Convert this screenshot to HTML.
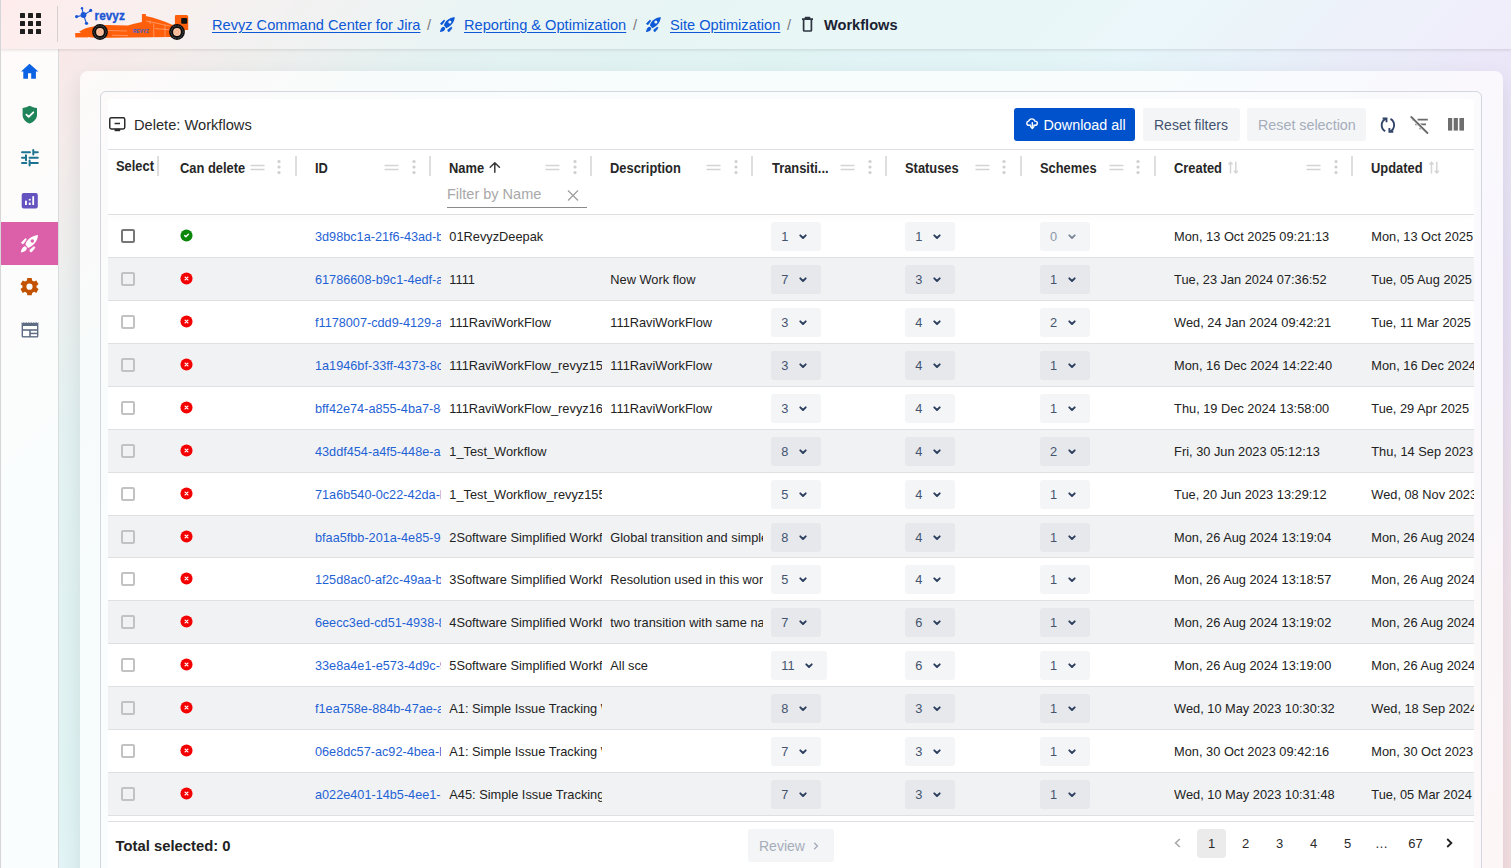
<!DOCTYPE html>
<html><head><meta charset="utf-8">
<style>
*{box-sizing:border-box}
html,body{margin:0;padding:0}
body{width:1511px;height:868px;overflow:hidden;position:relative;font-family:"Liberation Sans",sans-serif;
background:linear-gradient(135deg,#ffe6e6 0%,#f2eceb 10%,#e3f1f1 21%,#e0f3f3 35%,#e4f4f8 50%,#ebe7f8 65%,#e9e0f4 77%,#f0e0e9 88%,#f4dfe1 100%);}
.abs{position:absolute}
#hdr{position:absolute;left:0;top:0;width:1511px;height:49px;background:rgba(255,255,255,0.25);box-shadow:0 1px 3px rgba(0,0,0,0.12);z-index:3}
#lline{position:absolute;left:0;top:0;width:1px;height:868px;background:#d6d6d6;z-index:4}
#side{position:absolute;left:0;top:49px;width:59px;height:819px;background:rgba(255,255,255,0.82);border-right:1px solid #d9dcdc;z-index:2}
.si{position:absolute;left:1px;width:57px;height:43px;display:flex;align-items:center;justify-content:center;padding-top:2px}
#outer{position:absolute;left:80px;top:71px;width:1423px;height:830px;background:rgba(255,255,255,0.72);border-radius:8px;box-shadow:0 8px 20px rgba(30,40,60,0.10)}
#inner{position:absolute;left:100px;top:91px;width:1382px;height:810px;background:rgba(255,255,255,0.25);border:1px solid #d3d6de;border-radius:6px}
#content{position:absolute;left:108px;top:99px;width:1366px;height:800px;background:#fff;overflow:hidden;border-radius:3px}
.bc{position:absolute;top:15px;font-size:14.6px;line-height:20px;white-space:nowrap}
.lnk{color:#0c58d6;text-decoration:underline;text-underline-offset:2px}
.sl{color:#7a7a7a;}
.title{position:absolute;left:26px;top:17.5px;font-size:14.65px;color:#2a2a2a;line-height:18px}
.btn{position:absolute;top:9px;height:33px;border-radius:3px;font-size:14px;display:flex;align-items:center;white-space:nowrap}
.hl{position:absolute;font-size:14px;font-weight:700;color:#272727;line-height:16px;white-space:nowrap;display:flex;align-items:center;transform:scaleX(0.92);transform-origin:0 0}
.hx{position:relative;display:inline-flex}
.hd,.kb{position:absolute;display:block;line-height:0}
.dv{position:absolute;top:57px;width:2px;height:20px;background:#dedede}
#hline{position:absolute;left:0;top:50px;width:1366px;height:1px;background:#dcdde6}
#hbot{position:absolute;left:0;top:114.80000000000001px;width:1366px;height:1px;background:#e0e0e0;z-index:2;box-shadow:0 2px 5px rgba(0,0,0,0.09)}
.row{position:absolute;left:0;width:1366px;height:43px;border-bottom:1px solid #dfe0e2}
.c{position:absolute;top:2px;height:40px;line-height:40px;font-size:12.8px;color:#222;white-space:nowrap;overflow:hidden}
.id{color:#1f62d4;font-size:12.7px}
.cb{position:absolute;top:14.4px;width:13.5px;height:13.5px;border:2px solid #777;border-radius:2px;background:#fff}
.cbd{border-color:#c2c2c2;background:transparent}
.st{position:absolute;top:14.4px;line-height:0}
.ddc{display:flex;align-items:center;top:0;height:42px}
.dd{display:inline-flex;align-items:center;height:29px;padding:0 13.7px 0 10px;background:rgba(9,30,66,0.045);border-radius:3px;color:#44546f;font-size:12.8px}
.ddv{position:relative;top:1.4px}
.dd svg{margin-left:10.9px;color:#2c3e5d;position:relative;top:0.7px}
.dd.dis{color:#8f98a8}
.dd.dis svg{color:#7f8999}
#foot{position:absolute;left:0;top:721.5px;width:1366px;height:1px;background:#dcdde6}
.pg{position:absolute;top:730px;height:28.5px;width:29px;font-size:13px;color:#2a2a2a;display:flex;align-items:center;justify-content:center}
</style></head><body>
<div id="lline"></div>
<div id="hdr">
  <svg class="abs" style="left:20px;top:13px" width="21" height="21" viewBox="0 0 21 21"><g fill="#1e1e1e"><rect x="0" y="0" width="5" height="5" rx="0.6"/><rect x="8" y="0" width="5" height="5" rx="0.6"/><rect x="16" y="0" width="5" height="5" rx="0.6"/><rect x="0" y="8" width="5" height="5" rx="0.6"/><rect x="8" y="8" width="5" height="5" rx="0.6"/><rect x="16" y="8" width="5" height="5" rx="0.6"/><rect x="0" y="16" width="5" height="5" rx="0.6"/><rect x="8" y="16" width="5" height="5" rx="0.6"/><rect x="16" y="16" width="5" height="5" rx="0.6"/></g></svg>
  <div class="abs" style="left:57px;top:6px;width:1px;height:36px;background:#d4d0d0"></div>
  <svg class="abs" style="left:70px;top:2px" width="125" height="44" viewBox="70 2 125 44">
  <g stroke="#1a56d6" stroke-width="1.1"><line x1="83.5" y1="15.2" x2="82" y2="8.2"/><line x1="83.5" y1="15.2" x2="90.7" y2="10.6"/><line x1="83.5" y1="15.2" x2="76.6" y2="16.6"/><line x1="83.5" y1="15.2" x2="86.5" y2="23.3"/></g>
  <g fill="#1a56d6"><circle cx="83.5" cy="15" r="2.9"/><circle cx="82" cy="8.2" r="1.2"/><circle cx="90.7" cy="10.4" r="1.6"/><circle cx="76.6" cy="16.6" r="1.6"/><circle cx="86.5" cy="23.3" r="1.6"/></g>
  <text x="94.6" y="19.8" font-family="Liberation Sans" font-weight="700" font-size="12.3" fill="#1a56d6" stroke="#1a56d6" stroke-width="0.35" textLength="30.2" lengthAdjust="spacingAndGlyphs">revyz</text>
  <g fill="#ff5e0b">
    <path d="M75.2 33 H88 V37.4 H75.2 Z"/>
    <path d="M79 31.8 C83 29 87 27.3 92 26.7 L106 25 L128 25.5 L133 24 L141.9 21.9 L141.9 14 L145.9 14 L145.9 16 C156 18 165 21.5 172 24.7 L174.9 24.7 L174.9 16 C175 15.5 175.5 15 176.5 15 L186.5 15 C187.5 15 188.2 15.8 188.2 17 L188.2 29.9 L185 29.9 L183 33 L171 37 L109 37.8 L92 37.4 L88 37 Z"/>
  </g>
  <g stroke="#fff" stroke-width="0.45" fill="none" opacity="0.75"><path d="M153.8 23.5 V37 M126 23.5 L131 23 M108 30.5 L127 31 M146 21 L170 26 M155 28.5 L172 30 M112 35.2 L128 35.6 M150 20.5 L150 24 M165 25 L165 37"/></g>
  <rect x="181.2" y="18" width="6" height="5.7" rx="1" fill="#111"/>
  <text x="133" y="32.9" font-family="Liberation Sans" font-weight="700" font-size="5.2" fill="#2f5fcf" textLength="16" lengthAdjust="spacingAndGlyphs">REVYZ</text>
  <circle cx="100" cy="32" r="7.9" fill="#0d0d0d"/><circle cx="100" cy="32" r="3.9" fill="#f8c3a3"/><circle cx="100" cy="32" r="1.6" fill="none" stroke="#f3a47a" stroke-width="0.6"/><circle cx="106.10" cy="32.00" r="0.45" fill="#d8d8d8"/><circle cx="105.73" cy="34.09" r="0.45" fill="#d8d8d8"/><circle cx="104.67" cy="35.92" r="0.45" fill="#d8d8d8"/><circle cx="103.05" cy="37.28" r="0.45" fill="#d8d8d8"/><circle cx="101.06" cy="38.01" r="0.45" fill="#d8d8d8"/><circle cx="98.94" cy="38.01" r="0.45" fill="#d8d8d8"/><circle cx="96.95" cy="37.28" r="0.45" fill="#d8d8d8"/><circle cx="95.33" cy="35.92" r="0.45" fill="#d8d8d8"/><circle cx="94.27" cy="34.09" r="0.45" fill="#d8d8d8"/><circle cx="93.90" cy="32.00" r="0.45" fill="#d8d8d8"/><circle cx="94.27" cy="29.91" r="0.45" fill="#d8d8d8"/><circle cx="95.33" cy="28.08" r="0.45" fill="#d8d8d8"/><circle cx="96.95" cy="26.72" r="0.45" fill="#d8d8d8"/><circle cx="98.94" cy="25.99" r="0.45" fill="#d8d8d8"/><circle cx="101.06" cy="25.99" r="0.45" fill="#d8d8d8"/><circle cx="103.05" cy="26.72" r="0.45" fill="#d8d8d8"/><circle cx="104.67" cy="28.08" r="0.45" fill="#d8d8d8"/><circle cx="105.73" cy="29.91" r="0.45" fill="#d8d8d8"/><circle cx="177" cy="32" r="7.9" fill="#0d0d0d"/><circle cx="177" cy="32" r="3.9" fill="#f8c3a3"/><circle cx="177" cy="32" r="1.6" fill="none" stroke="#f3a47a" stroke-width="0.6"/><circle cx="183.10" cy="32.00" r="0.45" fill="#d8d8d8"/><circle cx="182.73" cy="34.09" r="0.45" fill="#d8d8d8"/><circle cx="181.67" cy="35.92" r="0.45" fill="#d8d8d8"/><circle cx="180.05" cy="37.28" r="0.45" fill="#d8d8d8"/><circle cx="178.06" cy="38.01" r="0.45" fill="#d8d8d8"/><circle cx="175.94" cy="38.01" r="0.45" fill="#d8d8d8"/><circle cx="173.95" cy="37.28" r="0.45" fill="#d8d8d8"/><circle cx="172.33" cy="35.92" r="0.45" fill="#d8d8d8"/><circle cx="171.27" cy="34.09" r="0.45" fill="#d8d8d8"/><circle cx="170.90" cy="32.00" r="0.45" fill="#d8d8d8"/><circle cx="171.27" cy="29.91" r="0.45" fill="#d8d8d8"/><circle cx="172.33" cy="28.08" r="0.45" fill="#d8d8d8"/><circle cx="173.95" cy="26.72" r="0.45" fill="#d8d8d8"/><circle cx="175.94" cy="25.99" r="0.45" fill="#d8d8d8"/><circle cx="178.06" cy="25.99" r="0.45" fill="#d8d8d8"/><circle cx="180.05" cy="26.72" r="0.45" fill="#d8d8d8"/><circle cx="181.67" cy="28.08" r="0.45" fill="#d8d8d8"/><circle cx="182.73" cy="29.91" r="0.45" fill="#d8d8d8"/>
</svg>
  <div class="bc" style="left:212px"><span class="lnk">Revyz Command Center for Jira</span></div>
  <div class="bc sl" style="left:427px">/</div>
  <svg class="abs" style="left:440.4px;top:16.5px" width="14.8" height="15.1" viewBox="5.9 5 17.1 17.5"><path d="M10.4 14.5 C11.5 10 16 6 23 5 C22.6 11 19 15.5 13.1 18 Z" fill="#0c58d6"/><circle cx="17.3" cy="10.9" r="1.75" fill="#ecf2f2"/><path d="M6.4 12.5 L10.4 8.6 L11.3 8.9 L10.9 10.1 L8.5 13.6 L7.1 13.7 Z" fill="#0c58d6" stroke="#0c58d6" stroke-width="0.7" stroke-linejoin="round"/><path d="M14.8 19.9 L19.1 16.5 L19.8 17.5 L19.1 18.9 L16.4 22 L15.3 21.8 Z" fill="#0c58d6" stroke="#0c58d6" stroke-width="0.7" stroke-linejoin="round"/><path d="M5.9 22.5 C6 20 7.3 17.2 9.6 16.3 C10.6 16.2 11.8 17.2 11.9 18.6 C11.4 20.8 8.8 22.3 5.9 22.5 Z" fill="#0c58d6"/></svg>
  <div class="bc" style="left:464px"><span class="lnk">Reporting &amp; Optimization</span></div>
  <div class="bc sl" style="left:633px">/</div>
  <svg class="abs" style="left:646.3px;top:16.6px" width="14.8" height="15.1" viewBox="5.9 5 17.1 17.5"><path d="M10.4 14.5 C11.5 10 16 6 23 5 C22.6 11 19 15.5 13.1 18 Z" fill="#0c58d6"/><circle cx="17.3" cy="10.9" r="1.75" fill="#e8f5f5"/><path d="M6.4 12.5 L10.4 8.6 L11.3 8.9 L10.9 10.1 L8.5 13.6 L7.1 13.7 Z" fill="#0c58d6" stroke="#0c58d6" stroke-width="0.7" stroke-linejoin="round"/><path d="M14.8 19.9 L19.1 16.5 L19.8 17.5 L19.1 18.9 L16.4 22 L15.3 21.8 Z" fill="#0c58d6" stroke="#0c58d6" stroke-width="0.7" stroke-linejoin="round"/><path d="M5.9 22.5 C6 20 7.3 17.2 9.6 16.3 C10.6 16.2 11.8 17.2 11.9 18.6 C11.4 20.8 8.8 22.3 5.9 22.5 Z" fill="#0c58d6"/></svg>
  <div class="bc" style="left:670px"><span class="lnk">Site Optimization</span></div>
  <div class="bc sl" style="left:787px">/</div>
  <svg class="abs" style="left:801px;top:16px" width="13" height="16" viewBox="0 0 13 16"><path d="M1 3.2H12M4.5 3V1.6H8.5V3M2.6 3.4V14.2C2.6 14.7 3 15 3.4 15H9.6C10 15 10.4 14.7 10.4 14.2V3.4" fill="none" stroke="#2e3440" stroke-width="1.7" stroke-linejoin="round"/></svg>
  <div class="bc" style="left:824px;font-weight:700;color:#1a2232">Workflows</div>
</div>
<div id="side">
  <div class="si" style="top:1px"><svg width="30" height="30" viewBox="0 0 30 30"><path d="M14.5 5.7 L6 13.5 H8.3 V20.7 H13 V15.2 H16.2 V20.7 H20.9 V13.5 H23.3 Z" fill="#0b62e3"/></svg></div>
<div class="si" style="top:44px"><svg width="30" height="30" viewBox="0 0 30 30"><path d="M14.6 4.8 C12.3 6 10 6.8 7.6 7.1 V14 C7.6 18 10.6 21 14.6 22.6 C18.6 21 22 18 22 14 V7.1 C19.3 6.8 17 6 14.6 4.8 Z" fill="#1f845a"/><path d="M11.4 13.6 L13.7 15.9 L18.3 11.3" fill="none" stroke="#fff" stroke-width="1.8" stroke-linecap="round" stroke-linejoin="round"/></svg></div>
<div class="si" style="top:87px"><svg width="30" height="30" viewBox="0 0 30 30"><g stroke="#1d7491" stroke-width="2" stroke-linecap="round"><path d="M7 8.3H15M18.3 6V10.4M18.3 8.3H22.8M7 13.7H10.5M11 11.3V16.2M14.5 13.7H22.8M7 19H11.3M14.6 16.6V21.6M14.6 19H22.8"/></g></svg></div>
<div class="si" style="top:130px"><svg width="30" height="30" viewBox="0 0 30 30"><rect x="6.7" y="5.9" width="16.1" height="15.7" rx="2" fill="#6554c0"/><g fill="#fff"><rect x="10" y="13.7" width="1.9" height="4.3"/><rect x="13.8" y="11.9" width="1.9" height="1.6"/><rect x="13.8" y="15.6" width="1.9" height="2.4"/><rect x="17.3" y="9.2" width="1.8" height="8.8"/></g></svg></div>
<div class="si active" style="top:173px;background:#dc5fa9"><svg width="30" height="30" viewBox="0 0 30 30"><path d="M10.4 14.5 C11.5 10 16 6 23 5 C22.6 11 19 15.5 13.1 18 Z" fill="#fff"/><circle cx="17.3" cy="10.9" r="1.75" fill="#dc5fa9"/><path d="M6.4 12.5 L10.4 8.6 L11.3 8.9 L10.9 10.1 L8.5 13.6 L7.1 13.7 Z" fill="#fff" stroke="#fff" stroke-width="0.7" stroke-linejoin="round"/><path d="M14.8 19.9 L19.1 16.5 L19.8 17.5 L19.1 18.9 L16.4 22 L15.3 21.8 Z" fill="#fff" stroke="#fff" stroke-width="0.7" stroke-linejoin="round"/><path d="M5.9 22.5 C6 20 7.3 17.2 9.6 16.3 C10.6 16.2 11.8 17.2 11.9 18.6 C11.4 20.8 8.8 22.3 5.9 22.5 Z" fill="#fff"/></svg></div>
<div class="si" style="top:216px"><svg width="30" height="30" viewBox="0 0 30 30"><g transform="translate(14.5 13.7)"><path d="M-2.2 -8.6 H2.2 L2.6 -6.2 L4.6 -5.1 L6.8 -6.2 L9 -2.4 L7 -0.9 V0.9 L9 2.4 L6.8 6.2 L4.6 5.1 L2.6 6.2 L2.2 8.6 H-2.2 L-2.6 6.2 L-4.6 5.1 L-6.8 6.2 L-9 2.4 L-7 0.9 V-0.9 L-9 -2.4 L-6.8 -6.2 L-4.6 -5.1 L-2.6 -6.2 Z M0 -3.1 A3.1 3.1 0 1 0 0 3.1 A3.1 3.1 0 1 0 0 -3.1 Z" fill="#c25100" fill-rule="evenodd"/></g></svg></div>
<div class="si" style="top:259px"><svg width="30" height="30" viewBox="0 0 30 30"><path d="M6.6 6.2 L7.6 7 L8.8 6.2 L10 7 L11.3 6.2 L12.5 7 L13.8 6.2 L15 7 L16.3 6.2 L17.5 7 L18.8 6.2 L20 7 L21.3 6.2 L22.6 7 L23.4 6.2 V20 C23.4 21 22.6 21.6 21.8 21.6 H8.2 C7.4 21.6 6.6 21 6.6 20 Z" fill="#5e6c84"/><g fill="#fff"><rect x="8" y="10" width="14" height="3.2"/><rect x="8" y="14.8" width="6.2" height="5.3"/><rect x="15.8" y="14.8" width="6.2" height="1.9"/><rect x="15.8" y="18.2" width="6.2" height="1.9"/></g></svg></div>
</div>
<div id="outer"></div>
<div id="inner"></div>
<div id="content">
  <svg class="abs" style="left:1px;top:17.8px" width="17" height="15" viewBox="0 0 17 15"><rect x="0.75" y="0.85" width="15" height="11.1" rx="1.6" fill="none" stroke="#2b2b2b" stroke-width="1.5"/><path d="M5.6 6.4H11" stroke="#2b2b2b" stroke-width="1.5"/><rect x="5.6" y="11.8" width="5.6" height="2.4" fill="#2b2b2b"/></svg>
  <div class="title" style="left:26px;top:17px">Delete: Workflows</div>
  <div class="btn" style="left:906px;width:121px;background:#0052cc;color:#fff"><svg style="position:absolute;left:12px;top:10px" width="13" height="13" viewBox="0 0 13 13"><path d="M4.5 7.3H3C1.7 7.3 0.8 6.4 0.8 5.2C0.8 4.1 1.6 3.2 2.7 3.1C3.1 1.8 4.3 0.9 5.8 0.9C7.3 0.9 8.5 1.9 8.8 3.1C10.2 3.1 11.3 4 11.3 5.2C11.3 6.4 10.3 7.3 9.1 7.3H7.8" fill="none" stroke="#fff" stroke-width="1.4" stroke-linecap="round"/><path d="M6.3 4.6V10.3M4.6 8.6L6.3 10.5L8 8.6" fill="none" stroke="#fff" stroke-width="1.4" stroke-linecap="round" stroke-linejoin="round"/></svg><span style="position:absolute;left:29.5px;font-size:14.35px">Download all</span></div>
  <div class="btn" style="left:1035px;width:97px;background:#f4f5f7;color:#42526e"><span style="position:absolute;left:11px">Reset filters</span></div>
  <div class="btn" style="left:1139px;width:119px;background:#f4f5f7;color:#a5adba"><span style="position:absolute;left:11px;font-size:14.3px">Reset selection</span></div>
  <svg class="abs" style="left:1272px;top:18px" width="17" height="17" viewBox="0 0 17 17"><path d="M6.2 1.6 C3.5 2.7 1.7 5.2 1.7 8.2 C1.7 10.7 3 12.9 5.2 14.1" fill="none" stroke="#33466a" stroke-width="1.9"/><path d="M2.6 1.5 H6.5 V5.3" fill="none" stroke="#33466a" stroke-width="1.9"/><path d="M10.5 1.9 C12.6 3.1 14.1 5.4 14.1 8 C14.1 11 12.4 13.5 9.8 14.6" fill="none" stroke="#33466a" stroke-width="1.9"/><path d="M9.4 10.9 V14.8 H13.3" fill="none" stroke="#33466a" stroke-width="1.9"/></svg>
  <svg class="abs" style="left:1302px;top:17px" width="19" height="18" viewBox="0 0 19 18"><g stroke="#6b6b6b" stroke-width="1.8"><path d="M7.6 3.6H17.8M1.9 3.6H3.4M5.3 8.3H16M9.4 12.4H12.5"/></g><path d="M1.3 1 L17.4 17" stroke="#fff" stroke-width="3.4"/><path d="M1.3 1 L17.4 17" stroke="#6b6b6b" stroke-width="1.8" stroke-linecap="round"/></svg>
  <svg class="abs" style="left:1340px;top:19.3px" width="17" height="13" viewBox="0 0 17 13"><g fill="#6e6e6e"><rect x="0" y="0" width="4.2" height="12.6"/><rect x="5.7" y="0" width="4.2" height="12.6"/><rect x="11.4" y="0" width="4.6" height="12.6"/></g></svg>
  <div id="hline"></div>
  <div class="hl" style="left:7.8px;top:59.400000000000006px">Select</div><div class="dv" style="left:49px"></div><div class="hl" style="left:72.0px;top:60.69999999999999px">Can delete</div><span class="hd" style="left:141.5px;top:65px"><svg width="15" height="7" viewBox="0 0 15 7"><path d="M0.5 1.5H14.5M0.5 5.5H14.5" stroke="#d4d4d4" stroke-width="1.6"/></svg></span><span class="kb" style="left:169.2px;top:59.5px"><svg width="4" height="16" viewBox="0 0 4 16"><circle cx="2" cy="2.5" r="1.6" fill="#cfcfcf"/><circle cx="2" cy="8" r="1.6" fill="#cfcfcf"/><circle cx="2" cy="13.5" r="1.6" fill="#cfcfcf"/></svg></span><div class="dv" style="left:186.8px"></div><div class="hl" style="left:207.0px;top:60.69999999999999px">ID</div><span class="hd" style="left:275.8px;top:65px"><svg width="15" height="7" viewBox="0 0 15 7"><path d="M0.5 1.5H14.5M0.5 5.5H14.5" stroke="#d4d4d4" stroke-width="1.6"/></svg></span><span class="kb" style="left:303.5px;top:59.5px"><svg width="4" height="16" viewBox="0 0 4 16"><circle cx="2" cy="2.5" r="1.6" fill="#cfcfcf"/><circle cx="2" cy="8" r="1.6" fill="#cfcfcf"/><circle cx="2" cy="13.5" r="1.6" fill="#cfcfcf"/></svg></span><div class="dv" style="left:321.1px"></div><div class="hl" style="left:341.3px;top:60.69999999999999px">Name</div><span class="hd" style="left:381.2px;top:63px"><svg width="12" height="11" viewBox="0 0 12 11"><path d="M5.8 10.2V0.9M1.2 5.3L5.8 0.8L10.4 5.3" fill="none" stroke="#3a3a3a" stroke-width="1.5" stroke-linecap="round" stroke-linejoin="round"/></svg></span><span class="hd" style="left:436.8px;top:65px"><svg width="15" height="7" viewBox="0 0 15 7"><path d="M0.5 1.5H14.5M0.5 5.5H14.5" stroke="#d4d4d4" stroke-width="1.6"/></svg></span><span class="kb" style="left:464.5px;top:59.5px"><svg width="4" height="16" viewBox="0 0 4 16"><circle cx="2" cy="2.5" r="1.6" fill="#cfcfcf"/><circle cx="2" cy="8" r="1.6" fill="#cfcfcf"/><circle cx="2" cy="13.5" r="1.6" fill="#cfcfcf"/></svg></span><div class="dv" style="left:482.1px"></div><div class="hl" style="left:502.3px;top:60.69999999999999px">Description</div><span class="hd" style="left:598.0px;top:65px"><svg width="15" height="7" viewBox="0 0 15 7"><path d="M0.5 1.5H14.5M0.5 5.5H14.5" stroke="#d4d4d4" stroke-width="1.6"/></svg></span><span class="kb" style="left:625.7px;top:59.5px"><svg width="4" height="16" viewBox="0 0 4 16"><circle cx="2" cy="2.5" r="1.6" fill="#cfcfcf"/><circle cx="2" cy="8" r="1.6" fill="#cfcfcf"/><circle cx="2" cy="13.5" r="1.6" fill="#cfcfcf"/></svg></span><div class="dv" style="left:643.3px"></div><div class="hl" style="left:663.5px;top:60.69999999999999px">Transiti...</div><span class="hd" style="left:731.9px;top:65px"><svg width="15" height="7" viewBox="0 0 15 7"><path d="M0.5 1.5H14.5M0.5 5.5H14.5" stroke="#d4d4d4" stroke-width="1.6"/></svg></span><span class="kb" style="left:759.6px;top:59.5px"><svg width="4" height="16" viewBox="0 0 4 16"><circle cx="2" cy="2.5" r="1.6" fill="#cfcfcf"/><circle cx="2" cy="8" r="1.6" fill="#cfcfcf"/><circle cx="2" cy="13.5" r="1.6" fill="#cfcfcf"/></svg></span><div class="dv" style="left:777.2px"></div><div class="hl" style="left:797.4px;top:60.69999999999999px">Statuses</div><span class="hd" style="left:866.7px;top:65px"><svg width="15" height="7" viewBox="0 0 15 7"><path d="M0.5 1.5H14.5M0.5 5.5H14.5" stroke="#d4d4d4" stroke-width="1.6"/></svg></span><span class="kb" style="left:894.4px;top:59.5px"><svg width="4" height="16" viewBox="0 0 4 16"><circle cx="2" cy="2.5" r="1.6" fill="#cfcfcf"/><circle cx="2" cy="8" r="1.6" fill="#cfcfcf"/><circle cx="2" cy="13.5" r="1.6" fill="#cfcfcf"/></svg></span><div class="dv" style="left:912.0px"></div><div class="hl" style="left:932.2px;top:60.69999999999999px">Schemes</div><span class="hd" style="left:1000.6px;top:65px"><svg width="15" height="7" viewBox="0 0 15 7"><path d="M0.5 1.5H14.5M0.5 5.5H14.5" stroke="#d4d4d4" stroke-width="1.6"/></svg></span><span class="kb" style="left:1028.3px;top:59.5px"><svg width="4" height="16" viewBox="0 0 4 16"><circle cx="2" cy="2.5" r="1.6" fill="#cfcfcf"/><circle cx="2" cy="8" r="1.6" fill="#cfcfcf"/><circle cx="2" cy="13.5" r="1.6" fill="#cfcfcf"/></svg></span><div class="dv" style="left:1045.9px"></div><div class="hl" style="left:1066.1px;top:60.69999999999999px">Created</div><span class="hd" style="left:1119.9px;top:62px"><svg width="11" height="13" viewBox="0 0 11 13"><path d="M2.5 11.9V1.2M0.9 2.9L2.5 1.2L4.1 2.9M7.8 1.2V11.9M6.2 10.2L7.8 11.9L9.4 10.2" fill="none" stroke="#d5d5d5" stroke-width="1.5" stroke-linecap="round" stroke-linejoin="round"/></svg></span><span class="hd" style="left:1197.8px;top:65px"><svg width="15" height="7" viewBox="0 0 15 7"><path d="M0.5 1.5H14.5M0.5 5.5H14.5" stroke="#d4d4d4" stroke-width="1.6"/></svg></span><span class="kb" style="left:1225.5px;top:59.5px"><svg width="4" height="16" viewBox="0 0 4 16"><circle cx="2" cy="2.5" r="1.6" fill="#cfcfcf"/><circle cx="2" cy="8" r="1.6" fill="#cfcfcf"/><circle cx="2" cy="13.5" r="1.6" fill="#cfcfcf"/></svg></span><div class="dv" style="left:1243.1px"></div><div class="hl" style="left:1263.3px;top:60.69999999999999px">Updated</div><span class="hd" style="left:1320.7px;top:62px"><svg width="11" height="13" viewBox="0 0 11 13"><path d="M2.5 11.9V1.2M0.9 2.9L2.5 1.2L4.1 2.9M7.8 1.2V11.9M6.2 10.2L7.8 11.9L9.4 10.2" fill="none" stroke="#d5d5d5" stroke-width="1.5" stroke-linecap="round" stroke-linejoin="round"/></svg></span>
  <div class="abs" style="left:339px;top:86px;width:140px;height:23px;border-bottom:1px solid #8a8a8a;">
    <span class="abs" style="left:0;top:1px;font-size:14.5px;color:#a8a8a8;white-space:nowrap">Filter by Name</span>
    <svg class="abs" style="left:120px;top:5px" width="12" height="11" viewBox="0 0 12 11"><path d="M1 0.5L11 10.5M11 0.5L1 10.5" stroke="#a0a0a0" stroke-width="1.3"/></svg>
  </div>
  <div id="hbot"></div>
  <div class="row" style="top:116px;height:43px;background:#fff"><span class="cb" style="left:13.2px"></span><span class="st" style="left:72.0px"><svg width="13" height="13" viewBox="0 0 13 13"><circle cx="6.5" cy="6.5" r="6.05" fill="#0b870b"/><path d="M4.6 6.6 L5.9 7.8 L8.4 5.3" fill="none" stroke="#fff" stroke-width="1.4" stroke-linecap="round" stroke-linejoin="round"/></svg></span><div class="c id" style="left:207.0px;width:126.3px">3d98bc1a-21f6-43ad-b9e1</div><div class="c" style="left:341.3px;width:153.0px">01RevyzDeepak</div><div class="c" style="left:502.3px;width:153.2px"></div><div class="c ddc" style="left:663.3px"><span class="dd"><span class="ddv">1</span><svg width="8" height="6" viewBox="0 0 8 6"><path d="M1.3 1.3 L4 4 L6.7 1.3" fill="none" stroke="currentColor" stroke-width="1.9" stroke-linecap="round" stroke-linejoin="round"/></svg></span></div><div class="c ddc" style="left:797.2px"><span class="dd"><span class="ddv">1</span><svg width="8" height="6" viewBox="0 0 8 6"><path d="M1.3 1.3 L4 4 L6.7 1.3" fill="none" stroke="currentColor" stroke-width="1.9" stroke-linecap="round" stroke-linejoin="round"/></svg></span></div><div class="c ddc" style="left:932.0px"><span class="dd dis"><span class="ddv">0</span><svg width="8" height="6" viewBox="0 0 8 6"><path d="M1.3 1.3 L4 4 L6.7 1.3" fill="none" stroke="currentColor" stroke-width="1.9" stroke-linecap="round" stroke-linejoin="round"/></svg></span></div><div class="c" style="left:1066.1px;width:189.2px">Mon, 13 Oct 2025 09:21:13</div><div class="c" style="left:1263.3px;width:189.0px">Mon, 13 Oct 2025</div></div>
<div class="row" style="top:159px;height:43px;background:#f1f2f4"><span class="cb cbd" style="left:13.2px"></span><span class="st" style="left:72.0px"><svg width="13" height="13" viewBox="0 0 13 13"><circle cx="6.5" cy="6.5" r="6.05" fill="#f50000"/><path d="M5.1 5.1 L7.9 7.9 M7.9 5.1 L5.1 7.9" fill="none" stroke="#fff" stroke-width="1.3" stroke-linecap="round"/></svg></span><div class="c id" style="left:207.0px;width:126.3px">61786608-b9c1-4edf-a3c2</div><div class="c" style="left:341.3px;width:153.0px">1111</div><div class="c" style="left:502.3px;width:153.2px">New Work flow</div><div class="c ddc" style="left:663.3px"><span class="dd"><span class="ddv">7</span><svg width="8" height="6" viewBox="0 0 8 6"><path d="M1.3 1.3 L4 4 L6.7 1.3" fill="none" stroke="currentColor" stroke-width="1.9" stroke-linecap="round" stroke-linejoin="round"/></svg></span></div><div class="c ddc" style="left:797.2px"><span class="dd"><span class="ddv">3</span><svg width="8" height="6" viewBox="0 0 8 6"><path d="M1.3 1.3 L4 4 L6.7 1.3" fill="none" stroke="currentColor" stroke-width="1.9" stroke-linecap="round" stroke-linejoin="round"/></svg></span></div><div class="c ddc" style="left:932.0px"><span class="dd"><span class="ddv">1</span><svg width="8" height="6" viewBox="0 0 8 6"><path d="M1.3 1.3 L4 4 L6.7 1.3" fill="none" stroke="currentColor" stroke-width="1.9" stroke-linecap="round" stroke-linejoin="round"/></svg></span></div><div class="c" style="left:1066.1px;width:189.2px">Tue, 23 Jan 2024 07:36:52</div><div class="c" style="left:1263.3px;width:189.0px">Tue, 05 Aug 2025</div></div>
<div class="row" style="top:202px;height:43px;background:#fff"><span class="cb cbd" style="left:13.2px"></span><span class="st" style="left:72.0px"><svg width="13" height="13" viewBox="0 0 13 13"><circle cx="6.5" cy="6.5" r="6.05" fill="#f50000"/><path d="M5.1 5.1 L7.9 7.9 M7.9 5.1 L5.1 7.9" fill="none" stroke="#fff" stroke-width="1.3" stroke-linecap="round"/></svg></span><div class="c id" style="left:207.0px;width:126.3px">f1178007-cdd9-4129-a1b2</div><div class="c" style="left:341.3px;width:153.0px">111RaviWorkFlow</div><div class="c" style="left:502.3px;width:153.2px">111RaviWorkFlow</div><div class="c ddc" style="left:663.3px"><span class="dd"><span class="ddv">3</span><svg width="8" height="6" viewBox="0 0 8 6"><path d="M1.3 1.3 L4 4 L6.7 1.3" fill="none" stroke="currentColor" stroke-width="1.9" stroke-linecap="round" stroke-linejoin="round"/></svg></span></div><div class="c ddc" style="left:797.2px"><span class="dd"><span class="ddv">4</span><svg width="8" height="6" viewBox="0 0 8 6"><path d="M1.3 1.3 L4 4 L6.7 1.3" fill="none" stroke="currentColor" stroke-width="1.9" stroke-linecap="round" stroke-linejoin="round"/></svg></span></div><div class="c ddc" style="left:932.0px"><span class="dd"><span class="ddv">2</span><svg width="8" height="6" viewBox="0 0 8 6"><path d="M1.3 1.3 L4 4 L6.7 1.3" fill="none" stroke="currentColor" stroke-width="1.9" stroke-linecap="round" stroke-linejoin="round"/></svg></span></div><div class="c" style="left:1066.1px;width:189.2px">Wed, 24 Jan 2024 09:42:21</div><div class="c" style="left:1263.3px;width:189.0px">Tue, 11 Mar 2025</div></div>
<div class="row" style="top:245px;height:43px;background:#f1f2f4"><span class="cb cbd" style="left:13.2px"></span><span class="st" style="left:72.0px"><svg width="13" height="13" viewBox="0 0 13 13"><circle cx="6.5" cy="6.5" r="6.05" fill="#f50000"/><path d="M5.1 5.1 L7.9 7.9 M7.9 5.1 L5.1 7.9" fill="none" stroke="#fff" stroke-width="1.3" stroke-linecap="round"/></svg></span><div class="c id" style="left:207.0px;width:126.3px">1a1946bf-33ff-4373-8c1d</div><div class="c" style="left:341.3px;width:153.0px">111RaviWorkFlow_revyz15</div><div class="c" style="left:502.3px;width:153.2px">111RaviWorkFlow</div><div class="c ddc" style="left:663.3px"><span class="dd"><span class="ddv">3</span><svg width="8" height="6" viewBox="0 0 8 6"><path d="M1.3 1.3 L4 4 L6.7 1.3" fill="none" stroke="currentColor" stroke-width="1.9" stroke-linecap="round" stroke-linejoin="round"/></svg></span></div><div class="c ddc" style="left:797.2px"><span class="dd"><span class="ddv">4</span><svg width="8" height="6" viewBox="0 0 8 6"><path d="M1.3 1.3 L4 4 L6.7 1.3" fill="none" stroke="currentColor" stroke-width="1.9" stroke-linecap="round" stroke-linejoin="round"/></svg></span></div><div class="c ddc" style="left:932.0px"><span class="dd"><span class="ddv">1</span><svg width="8" height="6" viewBox="0 0 8 6"><path d="M1.3 1.3 L4 4 L6.7 1.3" fill="none" stroke="currentColor" stroke-width="1.9" stroke-linecap="round" stroke-linejoin="round"/></svg></span></div><div class="c" style="left:1066.1px;width:189.2px">Mon, 16 Dec 2024 14:22:40</div><div class="c" style="left:1263.3px;width:189.0px">Mon, 16 Dec 2024</div></div>
<div class="row" style="top:288px;height:43px;background:#fff"><span class="cb cbd" style="left:13.2px"></span><span class="st" style="left:72.0px"><svg width="13" height="13" viewBox="0 0 13 13"><circle cx="6.5" cy="6.5" r="6.05" fill="#f50000"/><path d="M5.1 5.1 L7.9 7.9 M7.9 5.1 L5.1 7.9" fill="none" stroke="#fff" stroke-width="1.3" stroke-linecap="round"/></svg></span><div class="c id" style="left:207.0px;width:126.3px">bff42e74-a855-4ba7-8e2f</div><div class="c" style="left:341.3px;width:153.0px">111RaviWorkFlow_revyz16</div><div class="c" style="left:502.3px;width:153.2px">111RaviWorkFlow</div><div class="c ddc" style="left:663.3px"><span class="dd"><span class="ddv">3</span><svg width="8" height="6" viewBox="0 0 8 6"><path d="M1.3 1.3 L4 4 L6.7 1.3" fill="none" stroke="currentColor" stroke-width="1.9" stroke-linecap="round" stroke-linejoin="round"/></svg></span></div><div class="c ddc" style="left:797.2px"><span class="dd"><span class="ddv">4</span><svg width="8" height="6" viewBox="0 0 8 6"><path d="M1.3 1.3 L4 4 L6.7 1.3" fill="none" stroke="currentColor" stroke-width="1.9" stroke-linecap="round" stroke-linejoin="round"/></svg></span></div><div class="c ddc" style="left:932.0px"><span class="dd"><span class="ddv">1</span><svg width="8" height="6" viewBox="0 0 8 6"><path d="M1.3 1.3 L4 4 L6.7 1.3" fill="none" stroke="currentColor" stroke-width="1.9" stroke-linecap="round" stroke-linejoin="round"/></svg></span></div><div class="c" style="left:1066.1px;width:189.2px">Thu, 19 Dec 2024 13:58:00</div><div class="c" style="left:1263.3px;width:189.0px">Tue, 29 Apr 2025</div></div>
<div class="row" style="top:331px;height:43px;background:#f1f2f4"><span class="cb cbd" style="left:13.2px"></span><span class="st" style="left:72.0px"><svg width="13" height="13" viewBox="0 0 13 13"><circle cx="6.5" cy="6.5" r="6.05" fill="#f50000"/><path d="M5.1 5.1 L7.9 7.9 M7.9 5.1 L5.1 7.9" fill="none" stroke="#fff" stroke-width="1.3" stroke-linecap="round"/></svg></span><div class="c id" style="left:207.0px;width:126.3px">43ddf454-a4f5-448e-a7d1</div><div class="c" style="left:341.3px;width:153.0px">1_Test_Workflow</div><div class="c" style="left:502.3px;width:153.2px"></div><div class="c ddc" style="left:663.3px"><span class="dd"><span class="ddv">8</span><svg width="8" height="6" viewBox="0 0 8 6"><path d="M1.3 1.3 L4 4 L6.7 1.3" fill="none" stroke="currentColor" stroke-width="1.9" stroke-linecap="round" stroke-linejoin="round"/></svg></span></div><div class="c ddc" style="left:797.2px"><span class="dd"><span class="ddv">4</span><svg width="8" height="6" viewBox="0 0 8 6"><path d="M1.3 1.3 L4 4 L6.7 1.3" fill="none" stroke="currentColor" stroke-width="1.9" stroke-linecap="round" stroke-linejoin="round"/></svg></span></div><div class="c ddc" style="left:932.0px"><span class="dd"><span class="ddv">2</span><svg width="8" height="6" viewBox="0 0 8 6"><path d="M1.3 1.3 L4 4 L6.7 1.3" fill="none" stroke="currentColor" stroke-width="1.9" stroke-linecap="round" stroke-linejoin="round"/></svg></span></div><div class="c" style="left:1066.1px;width:189.2px">Fri, 30 Jun 2023 05:12:13</div><div class="c" style="left:1263.3px;width:189.0px">Thu, 14 Sep 2023</div></div>
<div class="row" style="top:374px;height:43px;background:#fff"><span class="cb cbd" style="left:13.2px"></span><span class="st" style="left:72.0px"><svg width="13" height="13" viewBox="0 0 13 13"><circle cx="6.5" cy="6.5" r="6.05" fill="#f50000"/><path d="M5.1 5.1 L7.9 7.9 M7.9 5.1 L5.1 7.9" fill="none" stroke="#fff" stroke-width="1.3" stroke-linecap="round"/></svg></span><div class="c id" style="left:207.0px;width:126.3px">71a6b540-0c22-42da-b6e3</div><div class="c" style="left:341.3px;width:153.0px">1_Test_Workflow_revyz155</div><div class="c" style="left:502.3px;width:153.2px"></div><div class="c ddc" style="left:663.3px"><span class="dd"><span class="ddv">5</span><svg width="8" height="6" viewBox="0 0 8 6"><path d="M1.3 1.3 L4 4 L6.7 1.3" fill="none" stroke="currentColor" stroke-width="1.9" stroke-linecap="round" stroke-linejoin="round"/></svg></span></div><div class="c ddc" style="left:797.2px"><span class="dd"><span class="ddv">4</span><svg width="8" height="6" viewBox="0 0 8 6"><path d="M1.3 1.3 L4 4 L6.7 1.3" fill="none" stroke="currentColor" stroke-width="1.9" stroke-linecap="round" stroke-linejoin="round"/></svg></span></div><div class="c ddc" style="left:932.0px"><span class="dd"><span class="ddv">1</span><svg width="8" height="6" viewBox="0 0 8 6"><path d="M1.3 1.3 L4 4 L6.7 1.3" fill="none" stroke="currentColor" stroke-width="1.9" stroke-linecap="round" stroke-linejoin="round"/></svg></span></div><div class="c" style="left:1066.1px;width:189.2px">Tue, 20 Jun 2023 13:29:12</div><div class="c" style="left:1263.3px;width:189.0px">Wed, 08 Nov 2023</div></div>
<div class="row" style="top:417px;height:42px;background:#f1f2f4"><span class="cb cbd" style="left:13.2px"></span><span class="st" style="left:72.0px"><svg width="13" height="13" viewBox="0 0 13 13"><circle cx="6.5" cy="6.5" r="6.05" fill="#f50000"/><path d="M5.1 5.1 L7.9 7.9 M7.9 5.1 L5.1 7.9" fill="none" stroke="#fff" stroke-width="1.3" stroke-linecap="round"/></svg></span><div class="c id" style="left:207.0px;width:126.3px">bfaa5fbb-201a-4e85-9d3c</div><div class="c" style="left:341.3px;width:153.0px">2Software Simplified Workflow</div><div class="c" style="left:502.3px;width:153.2px">Global transition and simple</div><div class="c ddc" style="left:663.3px"><span class="dd"><span class="ddv">8</span><svg width="8" height="6" viewBox="0 0 8 6"><path d="M1.3 1.3 L4 4 L6.7 1.3" fill="none" stroke="currentColor" stroke-width="1.9" stroke-linecap="round" stroke-linejoin="round"/></svg></span></div><div class="c ddc" style="left:797.2px"><span class="dd"><span class="ddv">4</span><svg width="8" height="6" viewBox="0 0 8 6"><path d="M1.3 1.3 L4 4 L6.7 1.3" fill="none" stroke="currentColor" stroke-width="1.9" stroke-linecap="round" stroke-linejoin="round"/></svg></span></div><div class="c ddc" style="left:932.0px"><span class="dd"><span class="ddv">1</span><svg width="8" height="6" viewBox="0 0 8 6"><path d="M1.3 1.3 L4 4 L6.7 1.3" fill="none" stroke="currentColor" stroke-width="1.9" stroke-linecap="round" stroke-linejoin="round"/></svg></span></div><div class="c" style="left:1066.1px;width:189.2px">Mon, 26 Aug 2024 13:19:04</div><div class="c" style="left:1263.3px;width:189.0px">Mon, 26 Aug 2024</div></div>
<div class="row" style="top:459px;height:43px;background:#fff"><span class="cb cbd" style="left:13.2px"></span><span class="st" style="left:72.0px"><svg width="13" height="13" viewBox="0 0 13 13"><circle cx="6.5" cy="6.5" r="6.05" fill="#f50000"/><path d="M5.1 5.1 L7.9 7.9 M7.9 5.1 L5.1 7.9" fill="none" stroke="#fff" stroke-width="1.3" stroke-linecap="round"/></svg></span><div class="c id" style="left:207.0px;width:126.3px">125d8ac0-af2c-49aa-b4e1</div><div class="c" style="left:341.3px;width:153.0px">3Software Simplified Workflow</div><div class="c" style="left:502.3px;width:153.2px">Resolution used in this workflow</div><div class="c ddc" style="left:663.3px"><span class="dd"><span class="ddv">5</span><svg width="8" height="6" viewBox="0 0 8 6"><path d="M1.3 1.3 L4 4 L6.7 1.3" fill="none" stroke="currentColor" stroke-width="1.9" stroke-linecap="round" stroke-linejoin="round"/></svg></span></div><div class="c ddc" style="left:797.2px"><span class="dd"><span class="ddv">4</span><svg width="8" height="6" viewBox="0 0 8 6"><path d="M1.3 1.3 L4 4 L6.7 1.3" fill="none" stroke="currentColor" stroke-width="1.9" stroke-linecap="round" stroke-linejoin="round"/></svg></span></div><div class="c ddc" style="left:932.0px"><span class="dd"><span class="ddv">1</span><svg width="8" height="6" viewBox="0 0 8 6"><path d="M1.3 1.3 L4 4 L6.7 1.3" fill="none" stroke="currentColor" stroke-width="1.9" stroke-linecap="round" stroke-linejoin="round"/></svg></span></div><div class="c" style="left:1066.1px;width:189.2px">Mon, 26 Aug 2024 13:18:57</div><div class="c" style="left:1263.3px;width:189.0px">Mon, 26 Aug 2024</div></div>
<div class="row" style="top:502px;height:43px;background:#f1f2f4"><span class="cb cbd" style="left:13.2px"></span><span class="st" style="left:72.0px"><svg width="13" height="13" viewBox="0 0 13 13"><circle cx="6.5" cy="6.5" r="6.05" fill="#f50000"/><path d="M5.1 5.1 L7.9 7.9 M7.9 5.1 L5.1 7.9" fill="none" stroke="#fff" stroke-width="1.3" stroke-linecap="round"/></svg></span><div class="c id" style="left:207.0px;width:126.3px">6eecc3ed-cd51-4938-8a2b</div><div class="c" style="left:341.3px;width:153.0px">4Software Simplified Workflow</div><div class="c" style="left:502.3px;width:153.2px">two transition with same name</div><div class="c ddc" style="left:663.3px"><span class="dd"><span class="ddv">7</span><svg width="8" height="6" viewBox="0 0 8 6"><path d="M1.3 1.3 L4 4 L6.7 1.3" fill="none" stroke="currentColor" stroke-width="1.9" stroke-linecap="round" stroke-linejoin="round"/></svg></span></div><div class="c ddc" style="left:797.2px"><span class="dd"><span class="ddv">6</span><svg width="8" height="6" viewBox="0 0 8 6"><path d="M1.3 1.3 L4 4 L6.7 1.3" fill="none" stroke="currentColor" stroke-width="1.9" stroke-linecap="round" stroke-linejoin="round"/></svg></span></div><div class="c ddc" style="left:932.0px"><span class="dd"><span class="ddv">1</span><svg width="8" height="6" viewBox="0 0 8 6"><path d="M1.3 1.3 L4 4 L6.7 1.3" fill="none" stroke="currentColor" stroke-width="1.9" stroke-linecap="round" stroke-linejoin="round"/></svg></span></div><div class="c" style="left:1066.1px;width:189.2px">Mon, 26 Aug 2024 13:19:02</div><div class="c" style="left:1263.3px;width:189.0px">Mon, 26 Aug 2024</div></div>
<div class="row" style="top:545px;height:43px;background:#fff"><span class="cb cbd" style="left:13.2px"></span><span class="st" style="left:72.0px"><svg width="13" height="13" viewBox="0 0 13 13"><circle cx="6.5" cy="6.5" r="6.05" fill="#f50000"/><path d="M5.1 5.1 L7.9 7.9 M7.9 5.1 L5.1 7.9" fill="none" stroke="#fff" stroke-width="1.3" stroke-linecap="round"/></svg></span><div class="c id" style="left:207.0px;width:126.3px">33e8a4e1-e573-4d9c-9f1a</div><div class="c" style="left:341.3px;width:153.0px">5Software Simplified Workflow</div><div class="c" style="left:502.3px;width:153.2px">All sce</div><div class="c ddc" style="left:663.3px"><span class="dd"><span class="ddv">11</span><svg width="8" height="6" viewBox="0 0 8 6"><path d="M1.3 1.3 L4 4 L6.7 1.3" fill="none" stroke="currentColor" stroke-width="1.9" stroke-linecap="round" stroke-linejoin="round"/></svg></span></div><div class="c ddc" style="left:797.2px"><span class="dd"><span class="ddv">6</span><svg width="8" height="6" viewBox="0 0 8 6"><path d="M1.3 1.3 L4 4 L6.7 1.3" fill="none" stroke="currentColor" stroke-width="1.9" stroke-linecap="round" stroke-linejoin="round"/></svg></span></div><div class="c ddc" style="left:932.0px"><span class="dd"><span class="ddv">1</span><svg width="8" height="6" viewBox="0 0 8 6"><path d="M1.3 1.3 L4 4 L6.7 1.3" fill="none" stroke="currentColor" stroke-width="1.9" stroke-linecap="round" stroke-linejoin="round"/></svg></span></div><div class="c" style="left:1066.1px;width:189.2px">Mon, 26 Aug 2024 13:19:00</div><div class="c" style="left:1263.3px;width:189.0px">Mon, 26 Aug 2024</div></div>
<div class="row" style="top:588px;height:43px;background:#f1f2f4"><span class="cb cbd" style="left:13.2px"></span><span class="st" style="left:72.0px"><svg width="13" height="13" viewBox="0 0 13 13"><circle cx="6.5" cy="6.5" r="6.05" fill="#f50000"/><path d="M5.1 5.1 L7.9 7.9 M7.9 5.1 L5.1 7.9" fill="none" stroke="#fff" stroke-width="1.3" stroke-linecap="round"/></svg></span><div class="c id" style="left:207.0px;width:126.3px">f1ea758e-884b-47ae-a2c4</div><div class="c" style="left:341.3px;width:153.0px">A1: Simple Issue Tracking Workflow</div><div class="c" style="left:502.3px;width:153.2px"></div><div class="c ddc" style="left:663.3px"><span class="dd"><span class="ddv">8</span><svg width="8" height="6" viewBox="0 0 8 6"><path d="M1.3 1.3 L4 4 L6.7 1.3" fill="none" stroke="currentColor" stroke-width="1.9" stroke-linecap="round" stroke-linejoin="round"/></svg></span></div><div class="c ddc" style="left:797.2px"><span class="dd"><span class="ddv">3</span><svg width="8" height="6" viewBox="0 0 8 6"><path d="M1.3 1.3 L4 4 L6.7 1.3" fill="none" stroke="currentColor" stroke-width="1.9" stroke-linecap="round" stroke-linejoin="round"/></svg></span></div><div class="c ddc" style="left:932.0px"><span class="dd"><span class="ddv">1</span><svg width="8" height="6" viewBox="0 0 8 6"><path d="M1.3 1.3 L4 4 L6.7 1.3" fill="none" stroke="currentColor" stroke-width="1.9" stroke-linecap="round" stroke-linejoin="round"/></svg></span></div><div class="c" style="left:1066.1px;width:189.2px">Wed, 10 May 2023 10:30:32</div><div class="c" style="left:1263.3px;width:189.0px">Wed, 18 Sep 2024</div></div>
<div class="row" style="top:631px;height:43px;background:#fff"><span class="cb cbd" style="left:13.2px"></span><span class="st" style="left:72.0px"><svg width="13" height="13" viewBox="0 0 13 13"><circle cx="6.5" cy="6.5" r="6.05" fill="#f50000"/><path d="M5.1 5.1 L7.9 7.9 M7.9 5.1 L5.1 7.9" fill="none" stroke="#fff" stroke-width="1.3" stroke-linecap="round"/></svg></span><div class="c id" style="left:207.0px;width:126.3px">06e8dc57-ac92-4bea-b1d3</div><div class="c" style="left:341.3px;width:153.0px">A1: Simple Issue Tracking Workflow</div><div class="c" style="left:502.3px;width:153.2px"></div><div class="c ddc" style="left:663.3px"><span class="dd"><span class="ddv">7</span><svg width="8" height="6" viewBox="0 0 8 6"><path d="M1.3 1.3 L4 4 L6.7 1.3" fill="none" stroke="currentColor" stroke-width="1.9" stroke-linecap="round" stroke-linejoin="round"/></svg></span></div><div class="c ddc" style="left:797.2px"><span class="dd"><span class="ddv">3</span><svg width="8" height="6" viewBox="0 0 8 6"><path d="M1.3 1.3 L4 4 L6.7 1.3" fill="none" stroke="currentColor" stroke-width="1.9" stroke-linecap="round" stroke-linejoin="round"/></svg></span></div><div class="c ddc" style="left:932.0px"><span class="dd"><span class="ddv">1</span><svg width="8" height="6" viewBox="0 0 8 6"><path d="M1.3 1.3 L4 4 L6.7 1.3" fill="none" stroke="currentColor" stroke-width="1.9" stroke-linecap="round" stroke-linejoin="round"/></svg></span></div><div class="c" style="left:1066.1px;width:189.2px">Mon, 30 Oct 2023 09:42:16</div><div class="c" style="left:1263.3px;width:189.0px">Mon, 30 Oct 2023</div></div>
<div class="row" style="top:674px;height:43px;background:#f1f2f4"><span class="cb cbd" style="left:13.2px"></span><span class="st" style="left:72.0px"><svg width="13" height="13" viewBox="0 0 13 13"><circle cx="6.5" cy="6.5" r="6.05" fill="#f50000"/><path d="M5.1 5.1 L7.9 7.9 M7.9 5.1 L5.1 7.9" fill="none" stroke="#fff" stroke-width="1.3" stroke-linecap="round"/></svg></span><div class="c id" style="left:207.0px;width:126.3px">a022e401-14b5-4ee1-a8f2</div><div class="c" style="left:341.3px;width:153.0px">A45: Simple Issue Tracking</div><div class="c" style="left:502.3px;width:153.2px"></div><div class="c ddc" style="left:663.3px"><span class="dd"><span class="ddv">7</span><svg width="8" height="6" viewBox="0 0 8 6"><path d="M1.3 1.3 L4 4 L6.7 1.3" fill="none" stroke="currentColor" stroke-width="1.9" stroke-linecap="round" stroke-linejoin="round"/></svg></span></div><div class="c ddc" style="left:797.2px"><span class="dd"><span class="ddv">3</span><svg width="8" height="6" viewBox="0 0 8 6"><path d="M1.3 1.3 L4 4 L6.7 1.3" fill="none" stroke="currentColor" stroke-width="1.9" stroke-linecap="round" stroke-linejoin="round"/></svg></span></div><div class="c ddc" style="left:932.0px"><span class="dd"><span class="ddv">1</span><svg width="8" height="6" viewBox="0 0 8 6"><path d="M1.3 1.3 L4 4 L6.7 1.3" fill="none" stroke="currentColor" stroke-width="1.9" stroke-linecap="round" stroke-linejoin="round"/></svg></span></div><div class="c" style="left:1066.1px;width:189.2px">Wed, 10 May 2023 10:31:48</div><div class="c" style="left:1263.3px;width:189.0px">Tue, 05 Mar 2024</div></div>
  <div id="foot"></div>
  <div class="abs" style="left:7.6px;top:739px;font-size:14.8px;font-weight:700;color:#222;white-space:nowrap">Total selected: 0</div>
  <div class="btn" style="left:640px;top:730px;width:86px;background:#f4f5f7;color:#a5adba"><span style="position:absolute;left:11px">Review</span><svg style="position:absolute;left:65px;top:13px" width="6" height="8" viewBox="0 0 6 8"><path d="M1.2 0.8L4.4 4L1.2 7.2" fill="none" stroke="#a5adba" stroke-width="1.4"/></svg></div>
  <svg class="abs" style="left:1066px;top:739px" width="7" height="10" viewBox="0 0 7 10"><path d="M5.8 1L1.6 5L5.8 9" fill="none" stroke="#a8a8a8" stroke-width="1.6"/></svg>
  <div class="pg" style="left:1089px;background:#ebebeb;border-radius:4px">1</div>
  <div class="pg" style="left:1123px">2</div>
  <div class="pg" style="left:1157px">3</div>
  <div class="pg" style="left:1191px">4</div>
  <div class="pg" style="left:1225px">5</div>
  <div class="pg" style="left:1259px">…</div>
  <div class="pg" style="left:1293px">67</div>
  <svg class="abs" style="left:1338px;top:739px" width="7" height="10" viewBox="0 0 7 10"><path d="M1.2 1L5.4 5L1.2 9" fill="none" stroke="#222" stroke-width="1.8"/></svg>
</div>
</body></html>
